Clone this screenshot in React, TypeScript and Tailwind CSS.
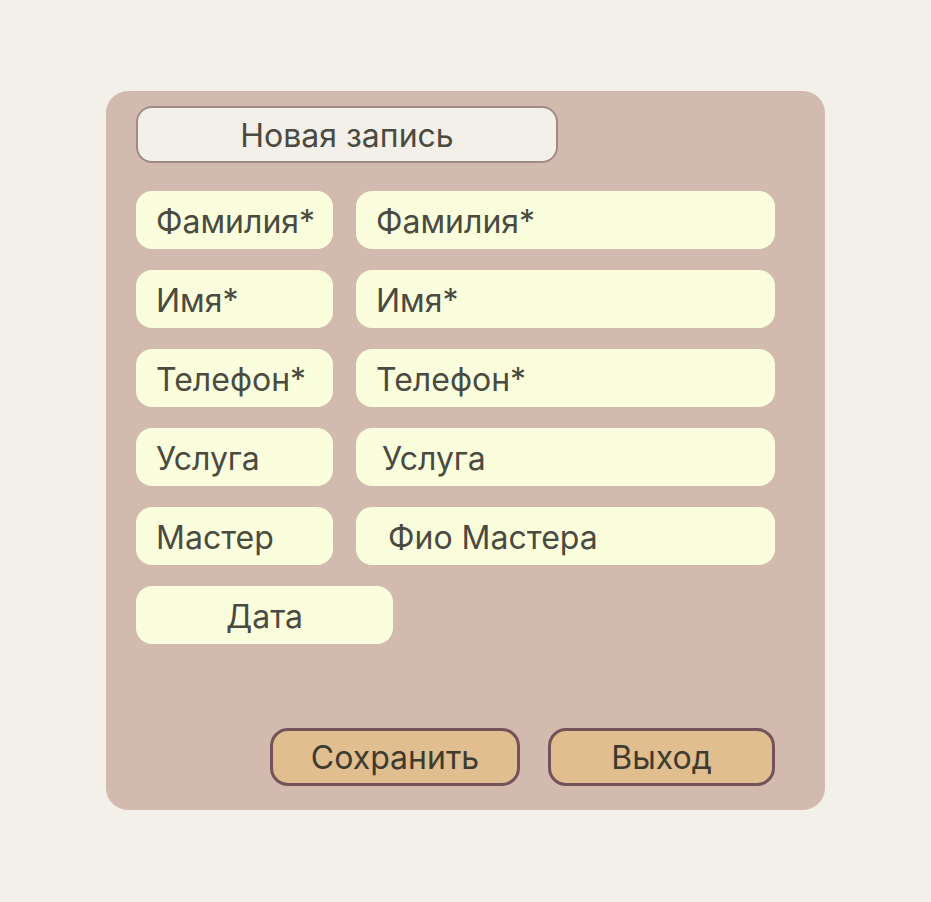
export default function App() {
  const rows = [
    { label: "Фамилия*", value: "Фамилия*", pad: "pl-5" },
    { label: "Имя*", value: "Имя*", pad: "pl-5" },
    { label: "Телефон*", value: "Телефон*", pad: "pl-5" },
    { label: "Услуга", value: "Услуга", pad: "pl-[26px]" },
    { label: "Мастер", value: "Фио Мастера", pad: "pl-8" },
  ];

  return (
    <div
      className="min-h-[902px] w-full bg-[#f3f0e9] pt-[91px] text-[#4a4a40]"
      style={{ fontFamily: "Inter, 'Noto Sans', sans-serif" }}
    >
      <div className="ml-[106px] flex h-[719px] w-[719px] flex-col rounded-[22px] bg-[#d2bbae] px-[30px] pt-[15px]">
        <div className="flex h-[57px] w-[422px] items-center justify-center rounded-[16px] border-2 border-[#a08a88] bg-[#f3f0e9] pt-[2px] text-[32px]">
          Новая запись
        </div>

        <div className="mt-[28px] flex flex-col gap-[21px]">
          {rows.map((r) => (
            <div key={r.label} className="flex gap-[23px]">
              <div className="flex h-[58px] w-[197px] items-center rounded-[16px] bg-[#fbfedd] pl-5 pt-[3px] text-[32px]">
                {r.label}
              </div>
              <div
                className={`flex h-[58px] w-[419px] items-center rounded-[16px] bg-[#fbfedd] pt-[3px] text-[32px] ${r.pad}`}
              >
                {r.value}
              </div>
            </div>
          ))}
          <div className="flex h-[58px] w-[257px] items-center justify-center rounded-[16px] bg-[#fbfedd] pt-[3px] text-[32px]">
            Дата
          </div>
        </div>

        <div className="mt-[84px] flex justify-end gap-[28px] pr-[20px]">
          <button className="flex h-[58px] w-[250px] items-center justify-center rounded-[18px] border-[3px] border-[#735259] bg-[#e0be90] pt-[2px] text-[32px] text-[#3f3a2e]">
            Сохранить
          </button>
          <button className="flex h-[58px] w-[227px] items-center justify-center rounded-[18px] border-[3px] border-[#735259] bg-[#e0be90] pt-[2px] text-[32px] text-[#3f3a2e]">
            Выход
          </button>
        </div>
      </div>
    </div>
  );
}
